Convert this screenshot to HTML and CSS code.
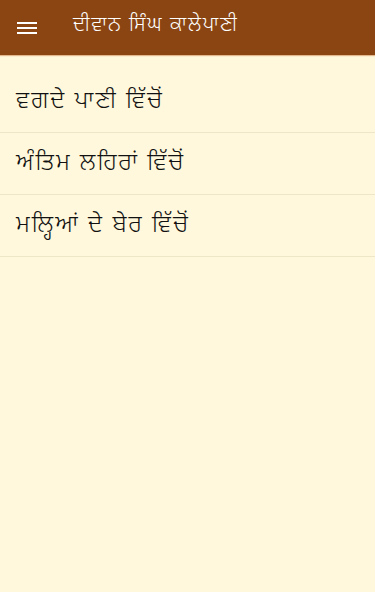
FILE: index.html
```html
<!DOCTYPE html>
<html lang="pa">
<head>
<meta charset="utf-8">
<meta name="viewport" content="width=device-width, initial-scale=1">
<link rel="stylesheet" href="styles.css">
<title>ਦੀਵਾਨ ਸਿੰਘ ਕਾਲੇਪਾਣੀ</title>
</head>
<body>
<header class="appbar">
  <button class="menu-btn" aria-label="menu">
    <svg width="24" height="24" viewBox="0 0 24 24"><path d="M2 18h20v-2H2v2zm0-5h20v-2H2v2zm0-7v2h20V6H2z" fill="#fff"/></svg>
  </button>
  <h1 class="title">ਦੀਵਾਨ ਸਿੰਘ ਕਾਲੇਪਾਣੀ</h1>
</header>
<ul class="list">
  <li class="item">ਵਗਦੇ ਪਾਣੀ ਵਿੱਚੋਂ</li>
  <li class="item">ਅੰਤਿਮ ਲਹਿਰਾਂ ਵਿੱਚੋਂ</li>
  <li class="item">ਮਲ੍ਹਿਆਂ ਦੇ ਬੇਰ ਵਿੱਚੋਂ</li>
</ul>
</body>
</html>
```
FILE: styles.css
```css
* { box-sizing: border-box; }
html, body { margin: 0; padding: 0; }
body {
  width: 375px;
  height: 592px;
  background: #fff8dc;
  font-family: "Noto Sans Gurmukhi", "Lohit Gurmukhi", "Noto Sans", Roboto, sans-serif;
  overflow: hidden;
}
.appbar {
  height: 55px;
  background: #8b4513;
  display: flex;
  align-items: center;
  padding: 0 0 0 15px;
  box-shadow: 0 1px 1px rgba(200,120,60,0.5);
}
.menu-btn {
  width: 24px;
  height: 24px;
  padding: 0;
  border: 0;
  background: none;
  display: flex;
}
.title {
  margin: 0 0 3px 34px;
  color: #fff;
  font-size: 20px;
  font-weight: 300;
  letter-spacing: 1.6px;
}
.list {
  list-style: none;
  margin: 0;
  padding: 16px 0 0 0;
}
.item {
  height: 62px;
  display: flex;
  align-items: center;
  padding: 0 16px;
  font-size: 24px;
  font-weight: 300;
  letter-spacing: 2px;
  color: #111;
  border-bottom: 1px solid #efe6c8;
}
```
